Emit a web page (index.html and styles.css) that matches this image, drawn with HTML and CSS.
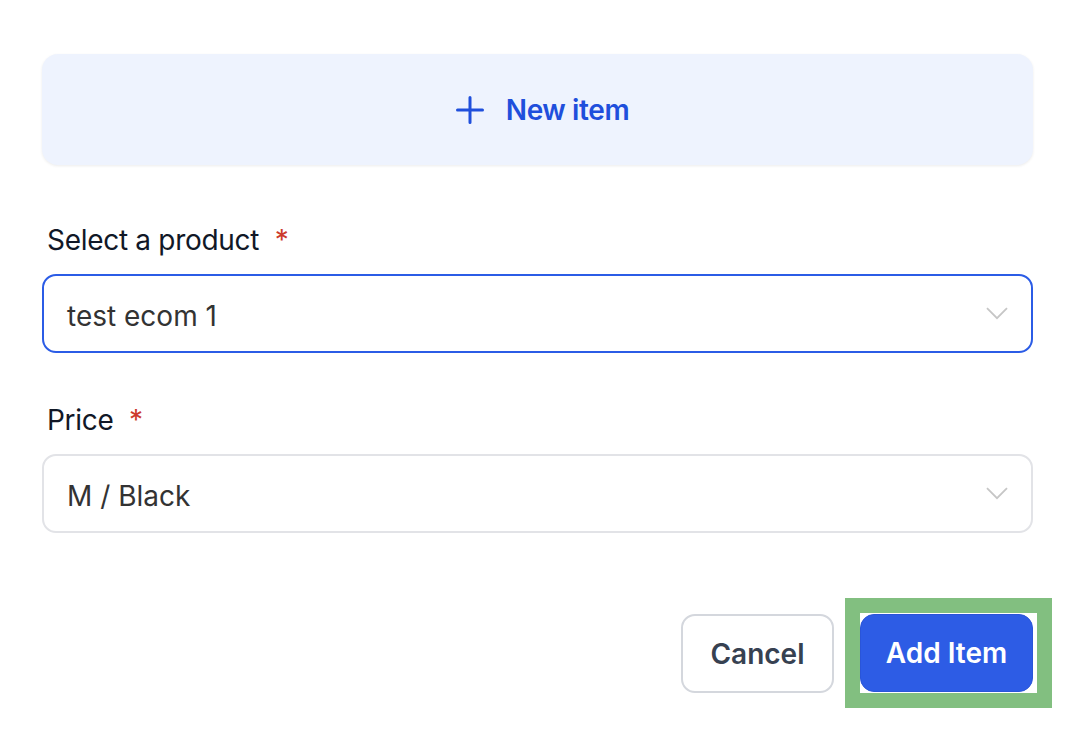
FILE: index.html
```html
<!DOCTYPE html>
<html lang="en">
<head>
    <meta charset="UTF-8">
    <meta name="viewport" content="width=device-width, initial-scale=1.0">
    <title>Add Item</title>
    <link rel="stylesheet" href="styles.css">
</head>
<body>
    <div class="panel">
        <button class="new-item" type="button">
            <svg class="plus-icon" width="28" height="28" viewBox="0 0 28 28" fill="none">
                <path d="M14 1.5v25M1.5 14h25" stroke="currentColor" stroke-width="3" stroke-linecap="round"/>
            </svg>
            <span>New item</span>
        </button>

        <div class="field field-first">
            <label class="field-label">Select a product <span class="req">*</span></label>
            <div class="select select-focus">
                <span class="select-value">test ecom 1</span>
                <svg class="chevron" width="22" height="13" viewBox="0 0 22 13" fill="none">
                    <path d="M1 1.2l10 10 10-10" stroke="currentColor" stroke-width="1.8"/>
                </svg>
            </div>
        </div>

        <div class="field">
            <label class="field-label">Price <span class="req">*</span></label>
            <div class="select">
                <span class="select-value">M / Black</span>
                <svg class="chevron" width="22" height="13" viewBox="0 0 22 13" fill="none">
                    <path d="M1 1.2l10 10 10-10" stroke="currentColor" stroke-width="1.8"/>
                </svg>
            </div>
        </div>

        <div class="actions">
            <button class="btn btn-cancel" type="button">Cancel</button>
            <div class="highlight">
                <button class="btn btn-primary" type="button">Add Item</button>
            </div>
        </div>
    </div>
</body>
</html>
```

FILE: styles.css
```css
body {
    font-family: Inter, "Noto Sans", sans-serif;
    background-color: #fff;
    margin: 0;
    padding: 0;
    min-height: 100vh;
}

.panel {
    width: 991px;
    margin-left: 42px;
    padding-top: 54px;
    padding-bottom: 60px;
}

.new-item {
    display: flex;
    align-items: center;
    justify-content: center;
    gap: 22px;
    width: 100%;
    height: 111px;
    padding: 0 0 0 10px;
    background-color: #eef3fe;
    border: none;
    border-radius: 16px;
    box-shadow: 0 1px 3px rgba(0, 0, 0, 0.08);
    color: #1f4fdc;
    font-family: inherit;
    font-size: 28px;
    font-weight: 600;
    letter-spacing: -0.4px;
    cursor: pointer;
}

.plus-icon {
    margin-top: 1px;
}

.field {
    margin-top: 50px;
}

.field-first {
    margin-top: 58px;
}

.field-label {
    display: block;
    margin-left: 5px;
    font-size: 28px;
    line-height: 34px;
    letter-spacing: -0.3px;
    color: #111827;
}

.req {
    margin-left: 8px;
    color: #cc3a2c;
}

.select {
    display: flex;
    align-items: center;
    justify-content: space-between;
    box-sizing: border-box;
    height: 79px;
    margin-top: 17px;
    padding: 4px 23px 0 23px;
    border: 2px solid #e2e3e7;
    border-radius: 14px;
    background-color: #fff;
}

.select-focus {
    border-color: #2b5ce6;
}

.select-value {
    font-size: 28px;
    color: #333;
}

.chevron {
    margin-top: -4px;
    color: #c6c6c6;
}

.actions {
    display: flex;
    justify-content: flex-end;
    gap: 26px;
    margin-top: 81px;
}

.btn {
    box-sizing: border-box;
    height: 79px;
    padding: 0;
    border-radius: 14px;
    font-family: inherit;
    font-size: 28px;
    font-weight: 600;
    white-space: nowrap;
    cursor: pointer;
}

.btn-cancel {
    width: 153px;
    background-color: #fff;
    border: 2px solid #d4d7dd;
    color: #374151;
}

.btn-primary {
    width: 173px;
    height: 78px;
    background-color: #2d5ce5;
    border: 1px solid #2a55d8;
    color: #fff;
}

.highlight {
    position: relative;
    display: flex;
    align-items: flex-start;
}

.highlight::after {
    content: "";
    position: absolute;
    top: -16px;
    right: -19px;
    bottom: -15px;
    left: -15px;
    border: 15px solid #82bf80;
    pointer-events: none;
}
```
